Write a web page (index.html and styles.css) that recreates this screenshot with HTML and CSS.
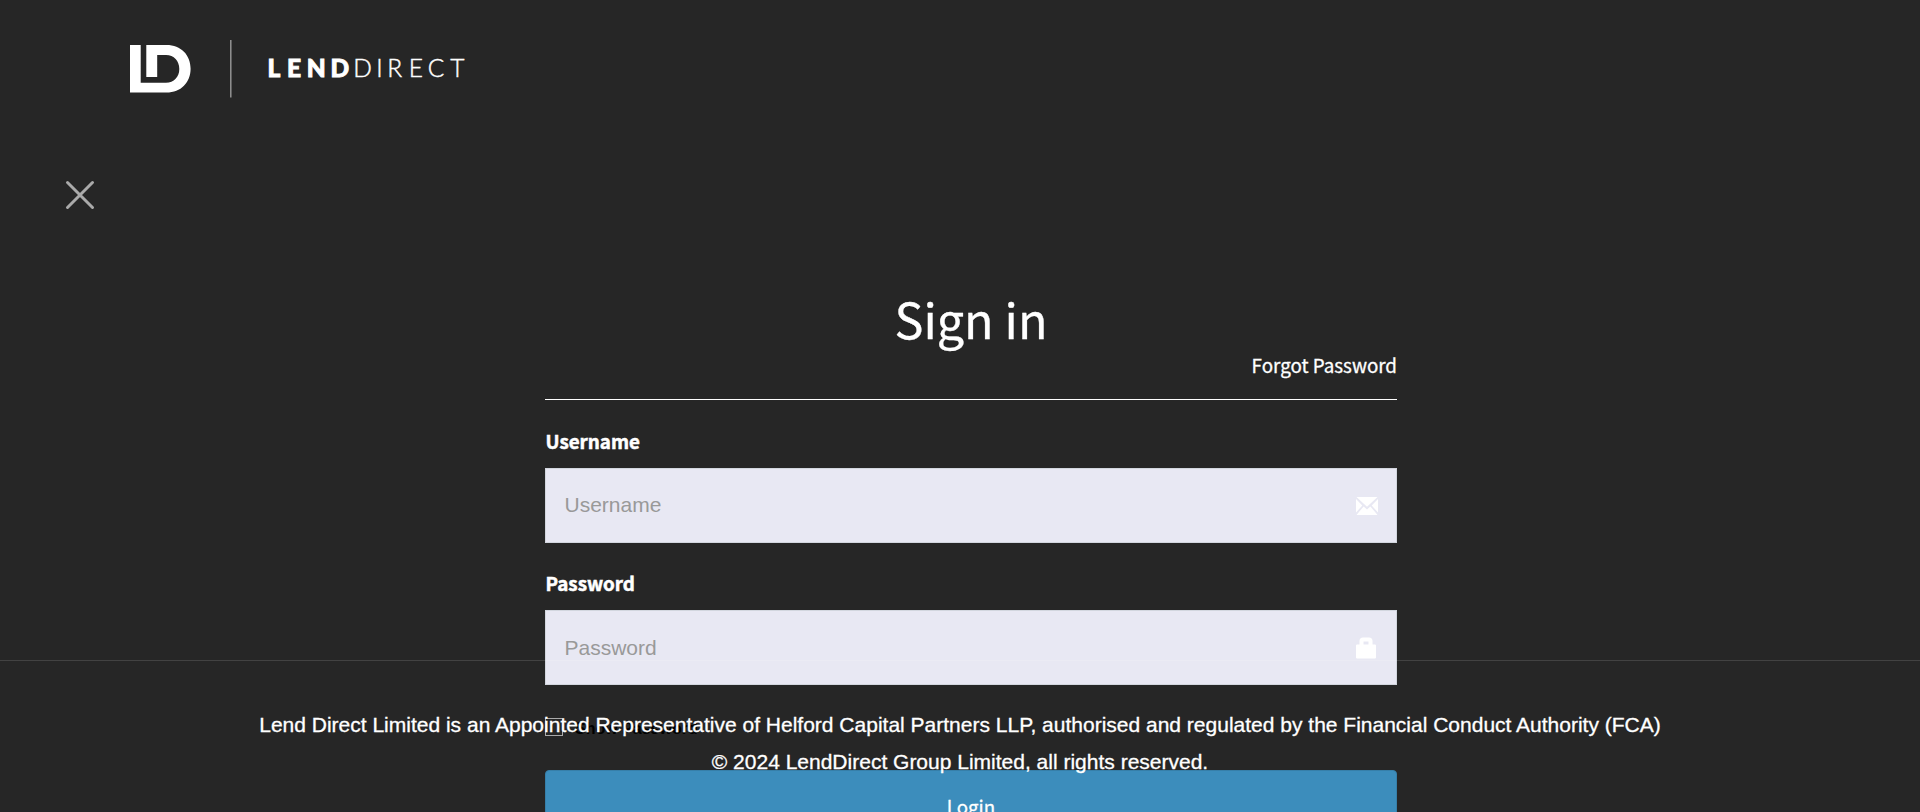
FILE: index.html
```html
<!DOCTYPE html>
<html lang="en">
<head>
<meta charset="utf-8">
<title>Sign in - LendDirect</title>
<link rel="stylesheet" href="styles.css">
</head>
<body>
<div class="page">
  <header class="header">
    <svg class="logo" width="340" height="60" viewBox="130 39 340 60" role="img" aria-label="LendDirect">
      <path fill="#fff" d="M130 45H140.7V82.7H166C174 82.7 179.3 77 179.3 69S174 55 166 55H157.2V77H146.3V45H166.500C181 45 190.600 55 190.600 68.700S181 92.500 166.500 92.500H130Z"/>
      <path stroke="#999" stroke-width="1.400" d="M230.800 40V97.500"/>
      <text class="word-bold" y="76.700" x="267.500 286.900 306.800 330.400">LEND</text>
      <text class="word-light" y="76.700" x="353.300 376.300 387.300 408.700 427.700 450.300">DIRECT</text>
    </svg>
  </header>
  <button class="close" type="button" aria-label="Close">
    <svg width="30" height="30" viewBox="0 0 30 30"><path d="M2.500 2.500L27.500 27.500M27.500 2.500L2.500 27.500" stroke="#aaa" stroke-width="3" stroke-linecap="round"/></svg>
  </button>
  <form class="form">
    <h1 class="title">Sign in</h1>
    <div class="forgot-row"><a class="forgot">Forgot Password</a></div>
    <label class="label" for="user">Username</label>
    <div class="field">
      <input class="input" id="user" type="text" placeholder="Username">
      <svg class="icon" width="22" height="18" viewBox="0 0 22 18"><path fill="#fff" d="M0.500 0H21.500L11 9.800ZM0 2L6.300 8.500L0 15.500ZM22 2V15.500L15.700 8.500ZM7.600 9.400L11 12.500L14.400 9.400L21.500 18H0.500Z"/></svg>
    </div>
    <label class="label" for="pass">Password</label>
    <div class="field field-pass">
      <input class="input" id="pass" type="password" placeholder="Password">
      <svg class="icon" width="22" height="22" viewBox="0 0 22 22"><path fill="#fff" fill-rule="evenodd" d="M0 8.500Q0 7.500 1 7.500H3.500V4Q3.500 .5 7 .5H13Q16.500 .5 16.500 4V7.500H19Q20 7.500 20 8.500V20.500Q20 21.500 19 21.500H1Q0 21.500 0 20.500ZM7.500 4.500V7.500H12.500V4.500Z"/></svg>
    </div>
    <label class="show"><span class="box"></span><span class="show-text">Show Password</span></label>
    <button class="login" type="button">Login</button>
  </form>
  <footer class="footer">
    <p class="line">Lend Direct Limited is an Appointed Representative of Helford Capital Partners LLP, authorised and regulated by the Financial Conduct Authority (FCA)</p>
    <p class="line">© 2024 LendDirect Group Limited, all rights reserved.</p>
  </footer>
</div>
</body>
</html>
```

FILE: styles.css
```css
* { box-sizing: border-box; }
body {
  margin: 0;
  background: #262626;
  color: #fff;
  font-family: "Noto Sans CJK SC", "Open Sans", sans-serif;
}
.page {
  position: relative;
  height: 812px;
  overflow: hidden;
  display: flex;
  flex-direction: column;
}
.header { padding: 39px 0 0 130px; height: 180px; flex: none; }
.logo { display: block; }
.word-bold, .word-light { font-family: Lato, sans-serif; font-size: 24.500px; fill: #fff; stroke: #fff; }
.word-bold { font-weight: 900; stroke-width: 0.900px; }
.word-light { font-weight: 300; stroke-width: 0.450px; }
.close {
  display: block;
  flex: none;
  width: 30px;
  height: 30px;
  margin: 0 0 0 65px;
  padding: 0;
  border: 0;
  background: none;
}
.close svg { display: block; }
.form {
  display: flex;
  flex-direction: column;
  flex: none;
  width: 852px;
  margin: 0 0 0 545px;
  padding-top: 73px;
}
.title {
  margin: 0;
  font-size: 48.500px;
  font-weight: 400;
  line-height: 70px;
  height: 70px;
  text-align: center;
  -webkit-text-stroke: 0.300px #fff;
}
.forgot-row {
  height: 47px;
  border-bottom: 1px solid #fff;
  text-align: right;
  font-size: 18.800px;
  font-weight: 400;
  line-height: 24px;
  -webkit-text-stroke: 0.300px #fff;
}
.label {
  height: 68px;
  padding: 29px 0 0 0.500px;
  font-size: 18.800px;
  font-weight: 700;
  line-height: 24px;
  -webkit-text-stroke: 0.500px #fff;
}
.field {
  display: flex;
  align-items: center;
  height: 75px;
  padding-right: 18px;
  background: #e8e8f3;
  border: 1px solid #d2d6de;
}
.field + .label { height: 67px; padding-top: 28px; }
.input {
  flex: 1;
  height: 73px;
  padding: 0 0 2px 18.500px;
  border: 0;
  outline: 0;
  background: none;
  font: 21px "Liberation Sans", Arial, sans-serif;
}
.field-pass .input { padding-bottom: 0; }
.input::placeholder { color: #999; opacity: 1; }
.show {
  display: flex;
  align-items: flex-start;
  gap: 12px;
  height: 85px;
  padding-top: 33px;
}
.box { width: 18px; height: 18px; border: 1px solid #aaa; }
.show-text {
  padding-top: 1px;
  color: #000;
  font: 700 16px/20px "Liberation Sans", Arial, sans-serif;
}
.login {
  height: 90px;
  padding: 0 0 18px;
  border: 1px solid #367fa9;
  border-radius: 4px;
  background: #3c8dbc;
  color: #fff;
  font: 400 18.700px/24px "Noto Sans CJK SC", sans-serif;
  -webkit-text-stroke: 0.300px #fff;
}
/* The footer is pinned to the window and overlaps the form. */
.footer {
  position: absolute;
  left: 0;
  right: 0;
  bottom: 0;
  height: 152px;
  padding-top: 45px;
  border-top: 1px solid rgba(255, 255, 255, 0.130);
  pointer-events: none;
}
.line {
  margin: 0;
  font: 21px/37px "Liberation Sans", Arial, sans-serif;
  text-align: center;
  -webkit-text-stroke: 0.300px #fff;
}
```
